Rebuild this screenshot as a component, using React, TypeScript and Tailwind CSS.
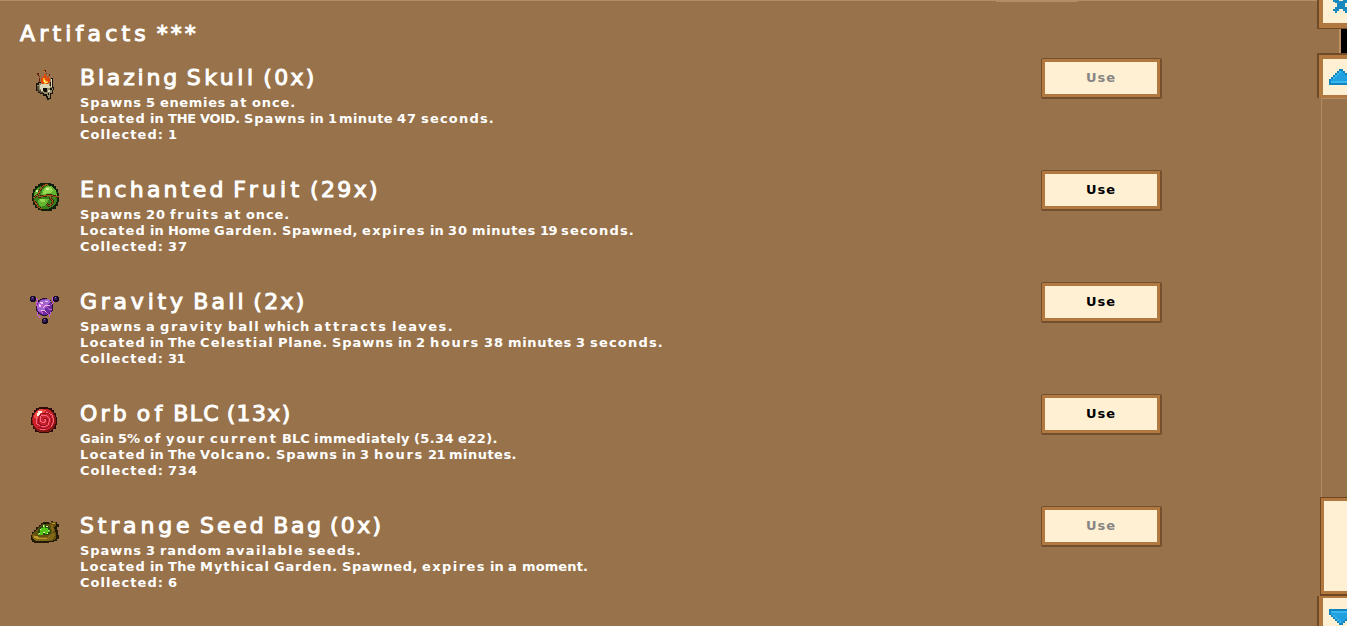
import { ReactNode } from "react";

const ADVANCE: Record<string, number> = {
  " ": 4, i: 4, I: 4, ".": 4, ",": 4, ":": 4, l: 6, "1": 7, "(": 6, ")": 6,
  t: 8, f: 8, L: 8, T: 8, w: 12, m: 12, M: 12, V: 12, v: 12, "%": 12, "*": 8.4,
};

let ctx: CanvasRenderingContext2D | null = null;
function natural(text: string, font: string) {
  if (!ctx) ctx = document.createElement("canvas").getContext("2d");
  ctx!.font = font;
  return ctx!.measureText(text).width;
}

const advance = (text: string) => [...text].reduce((n, c) => n + (ADVANCE[c] ?? 10), 0);

function Line({ text, big }: { text: string; big?: boolean }) {
  const font = big ? '22px "DejaVu Sans"' : 'bold 13px "DejaVu Sans"';
  const scale = big ? 5 / 3 : 1;
  const words = text.match(/\S+\s*/g) ?? [];
  return (
    <div
      className={
        big
          ? "flex h-6 whitespace-pre font-['DejaVu_Sans',sans-serif] text-[22px] leading-6 [-webkit-text-stroke:1px_white]"
          : "flex h-4 whitespace-pre font-['DejaVu_Sans',sans-serif] text-[13px] font-bold leading-4"
      }
    >
      {words.map((word, i) => {
        const glyphs = word.trimEnd();
        const letterSpacing = (advance(glyphs) * scale - natural(glyphs, font)) / glyphs.length;
        const wordSpacing = 4 * scale - natural(" ", font) - letterSpacing;
        return (
          <span key={i} className="shrink-0" style={{ width: advance(word) * scale, letterSpacing, wordSpacing }}>
            {word}
          </span>
        );
      })}
    </div>
  );
}

function Icon({ children }: { children: ReactNode }) {
  return (
    <svg width="32" height="32" viewBox="0 0 32 32" shapeRendering="crispEdges" className="mt-2.5 shrink-0">
      {children}
    </svg>
  );
}

const Skull = () => (
  <Icon>
    <path d="M9 13h13V9h2v9h1v3h-1v4h-2v5h-2v1h-2v-2h-1v-2h-3v-2h-3v-1H9v-2H7v-8h2z" fill="#1c150e" />
    <path d="M10 14h11v3h2v2h1v2h-1v3h-2v5h-2v-2h-1v-2h-3v-1h-3v-1h-2v-2H8v-5h2z" fill="#958b69" />
    <path d="M12 15h8v2h1v2h-4v1h-3v2h-2v-2h-1v-4h1zM22 10h1v8h-1zM19 21h2v2h-2z" fill="#dcd7b5" />
    <path d="M8 17h2v4h2v2h2v1h-3v-1H9v-2H8z" fill="#514830" />
    <path d="M14 19h4v4h-3v-1h-1zM21 19h2v2h-2zM19 24h1v2h-1zM17 25h1v2h-1z" fill="#0f0d0b" />
    <path d="M12 9h1V7h1v2h1V5h2v2h1v2h1V7h1v3h1v4h-2v1h-6v-1h-1z" fill="#e2470a" />
    <path d="M14 9h2v2h1v1h2v2h-2v1h-2v-2h-1z" fill="#ffac1b" />
    <path d="M15 11h1v2h2v1h-2v-1h-1z" fill="#fff4a0" />
    <path d="M8 4h2v3H9V6H8zM10 9h1v4h-1zM15 1h2v2h-2zM17 4h1v1h-1zM20 5h1v2h-1zM10 7h1v1h-1z" fill="#671f0c" />
    <path d="M15 2h1v1h-1z" fill="#f28a1b" />
  </Icon>
);
const Fruit = () => (
  <Icon>
    <path d="M11 2h11v1h3v2h2v3h2v4h1v9h-1v4h-2v3h-4v2H12v-1H9v-2H6v-3H4v-4H3V12h1V8h2V5h3V3h2z" fill="#10200a" />
    <circle cx="16.5" cy="16" r="12" fill="#39801c" />
    <path d="M13 9l4-4h6l4 5 1 5-6-2-10 2zM6 10l4-4-1 5-4 5zM10 18h10l-3 6-5 2-3-5z" fill="#62b431" />
    <path d="M15 8l3-2h4l2 4-3 2-7 1zM11 18h5v3h-4z" fill="#94d951" />
    <path d="M17 7h3v2h-3zM7 9h2v2H7z" fill="#d1f4a0" />
    <path d="M19 3l-5 2-3 4-2 5-5 3M9 16l5-1 7-1 3 1 6 1M22 15l-1 2 3 3-1 3-3 2-2-2M5 19l4 7 4 2" fill="none" stroke="#42200a" strokeWidth="2" />
    <path d="M19 3l-5 2-3 4-2 5-5 3M9 16l5-1 7-1 3 1 6 1M22 15l-1 2 3 3-1 3-3 2-2-2M5 19l4 7 4 2" fill="none" stroke="#a45a17" strokeWidth="1" />
  </Icon>
);
const Gravity = () => (
  <Icon>
    <circle cx="15.5" cy="14" r="9" fill="#251039" />
    <circle cx="15.5" cy="14" r="8" fill="#6a2c9b" />
    <path d="M9 10l4-3 6-1 3 3-4 3-3 6-5 1-2-4z" fill="#a064cc" />
    <path d="M11 9h3v2h-2v3h-2v-3h1zM16 8h3v1h-3z" fill="#eac6f4" />
    <path d="M7 5l2 3-2 3 2 3M24 4l-1 3 2 2-3 3M11 10l3 4 3-1 3 3 3 1M9 17l3 1 2 3M16 18l4 4M8 19l1 4 3 2M22 19l-2 5" fill="none" stroke="#c95bd5" />
    <path d="M14 15l3-3 4 1M12 18l3-1 2 2" fill="none" stroke="#efb5ed" />
    <path d="M2 3h4v1h1v4H6v1H2V8H1V4h1zM25 3h4v1h1v4h-1v1h-4V8h-1V4h1zM14 25h4v1h1v4h-1v1h-4v-1h-1v-4h1z" fill="#160b25" />
    <path d="M2 4h3v3H2zM25 4h3v3h-3zM14 26h3v3h-3z" fill="#402064" />
    <path d="M3 4h1v1H3zM26 4h1v1h-1zM15 26h1v1h-1z" fill="#9a62b5" />
  </Icon>
);
const Orb = () => (
  <Icon>
    <path d="M10 2h9v1h4v2h2v3h2v4h1v8h-1v4h-3v3h-4v1H10v-1H6v-3H4v-4H2v-8h1V8h2V5h2V3h3z" fill="#300b0b" />
    <circle cx="15" cy="15.5" r="12" fill="#841712" />
    <circle cx="14.5" cy="14.5" r="11" fill="#c9222a" />
    <path d="M6 8l5-4 6 1-4 4-5 5-3-1z" fill="#ef5146" />
    <path d="M9 6h4v2h-2v3H8V8h1z" fill="#fff0df" />
    <path d="M15 14l2 1-2 3-4-2 1-5 5-1 4 4-2 6-5 2-6-3-1-7M17 7l6 3 2 6-3 6M11 24l6 1" fill="none" stroke="#fa627d" />
    <path d="M14 15v-2h3l2 3-2 4-4 1-4-3 0-5 4-5 7 1 3 6-2 6-5 3-7-2" fill="none" stroke="#980e23" />
  </Icon>
);
const Bag = () => (
  <Icon>
    <path d="M14 5h6v1h2V4h2v1h4v2h2v3h-2v3h1v5h1v4h-2v2h-3v1h-5v1H5v-1H3v-2H2v-5h1v-3h2v-2h2v-3h3V8h2V6h2z" fill="#231a05" />
    <path d="M14 7h6l3-2h4v3l-2 3 2 5v6l-4 2H6l-3-3v-4l4-3 4-5z" fill="#65500f" />
    <path d="M4 17l5 3h9l6-4 2 2-2 4-5 2H8l-4-2zM22 8l2 0 1 5-2 2z" fill="#84681a" />
    <path d="M5 19h3l3 2h7v1H9l-4-1zM23 6h3v1h-3z" fill="#bc982f" />
    <path d="M9 14l3-5 4-2 5 3 1 5-3 3H9z" fill="#284d0e" />
    <path d="M12 11h2V8h2v3h3v2h2v2h-2v2h-3v-1h-2v2H9v-2h2v-3h1z" fill="#53c51b" />
    <path d="M14 8h1v2h-1zM17 9h2v1h-2zM11 12h1v1h-1zM19 13h1v1h-1zM14 15h2v1h-2zM10 16h1v1h-1zM18 16h1v1h-1z" fill="#e5edaa" />
  </Icon>
);

const artifacts = [
  { Pic: Skull, name: "Blazing Skull (0x)", lines: ["Spawns 5 enemies at once.", "Located in THE VOID. Spawns in 1 minute 47 seconds.", "Collected: 1"], off: true },
  { Pic: Fruit, name: "Enchanted Fruit (29x)", lines: ["Spawns 20 fruits at once.", "Located in Home Garden. Spawned, expires in 30 minutes 19 seconds.", "Collected: 37"] },
  { Pic: Gravity, name: "Gravity Ball (2x)", lines: ["Spawns a gravity ball which attracts leaves.", "Located in The Celestial Plane. Spawns in 2 hours 38 minutes 3 seconds.", "Collected: 31"] },
  { Pic: Orb, name: "Orb of BLC (13x)", lines: ["Gain 5% of your current BLC immediately (5.34 e22).", "Located in The Volcano. Spawns in 3 hours 21 minutes.", "Collected: 734"] },
  { Pic: Bag, name: "Strange Seed Bag (0x)", lines: ["Spawns 3 random available seeds.", "Located in The Mythical Garden. Spawned, expires in a moment.", "Collected: 6"], off: true },
];

function Arrow({ down }: { down?: boolean }) {
  return (
    <svg width="24" height="16" viewBox="0 0 24 16" shapeRendering="crispEdges" className={down ? "shrink-0 -scale-y-100" : "shrink-0"}>
      <path d="M10 0h4v2h2v2h2v2h2v2h2v2h2v6H0v-6h2V8h2V6h2V4h2V2h2z" fill="#1285bf" />
      <path d="M10 2h4v2h2v2h2v2h2v2h2v4H2v-4h2V8h2V6h2V4h2z" fill="#20a0df" />
      <path d="M2 12h20v2H2zM10 2h2v2h-2zM8 4h2v2H8zM6 6h2v2H6zM4 8h2v2H4z" fill="#38b6f0" />
    </svg>
  );
}

function Scrollbar() {
  return (
    <div className="flex h-[626px] w-[30px] flex-col overflow-hidden">
      <div className="h-[29px] shrink-0 border-b border-l-2 border-[#6f4b28]">
        <div className="h-[28px] border-b-[5px] border-l-4 border-[#b1783f] bg-[#fff0d3] pl-[10px]">
          <svg width="16" height="13" viewBox="0 0 16 13" shapeRendering="crispEdges">
            <path d="M0 0h6v1h4V0h6v2h-2v1h-2v4h2v2h2v2h-2v2h-2v-2h-2V9H6v2H4v2H2v-2H0V9h2V7h2V3H2V2H0z" fill="#1887bd" />
          </svg>
        </div>
      </div>
      <div className="flex h-6 shrink-0 justify-end"><div className="w-2 border-l-2 border-[#bd9163] bg-black" /></div>
      <div className="h-[45px] shrink-0 border-l-2 border-t-2 border-[#6f4b28]">
        <div className="flex h-[43px] border-y-4 border-l-4 border-b-[3px] border-[#b1783f] bg-[#fff0d3] pl-[6px] pt-[10px]"><Arrow /></div>
      </div>
      <div className="ml-1 h-[399px] shrink-0 border-l border-t border-[#b48c62]" />
      <div className="ml-[3px] h-[99px] shrink-0 border-b-2 border-l border-t border-[#70451f]">
        <div className="h-[96px] border-y-[3px] border-l-[3px] border-[#b1783f] bg-[#fff0d3]" />
      </div>
      <div className="h-[30px] shrink-0 border-l-2 border-[#6f4b28]">
        <div className="flex h-[30px] border-l-4 border-t-2 border-[#b1783f] bg-[#fff0d3] pl-[6px] pt-[11px]"><Arrow down /></div>
      </div>
    </div>
  );
}

export default function App() {
  return (
    <main className="flex h-[626px] w-[1347px] overflow-hidden bg-[#98724a] text-white">
      <section className="w-[1317px] border-t border-[#b58d65] pl-5">
        <div className="flex justify-end pr-[239px]"><div className="h-px w-[82px] bg-[#b58d65]" /></div>
        <div className="pt-[20px]"><Line text="Artifacts ***" big /></div>
        <div className="mt-[10px]">
          {artifacts.map(({ Pic, name, lines, off }) => (
            <article key={name} className="flex h-28">
              <div className="w-[60px] pl-[9px] pt-[3px]"><Pic /></div>
              <div className="w-[961px] pt-[10px]">
                <Line text={name} big />
                <div className="mt-[5px]">{lines.map((l) => <Line key={l} text={l} />)}</div>
              </div>
              <button disabled={off} className={`mt-[2px] flex h-[41px] w-[121px] items-center justify-center rounded-[2px] border border-b-2 border-r-2 border-[#75502e] ${off ? "text-[#858585]" : "text-black"}`}>
                <span className="flex h-full w-full items-center justify-center border-[3px] border-[#b1783f] bg-[#fff0d3]"><Line text="Use" /></span>
              </button>
            </article>
          ))}
        </div>
      </section>
      <Scrollbar />
    </main>
  );
}
